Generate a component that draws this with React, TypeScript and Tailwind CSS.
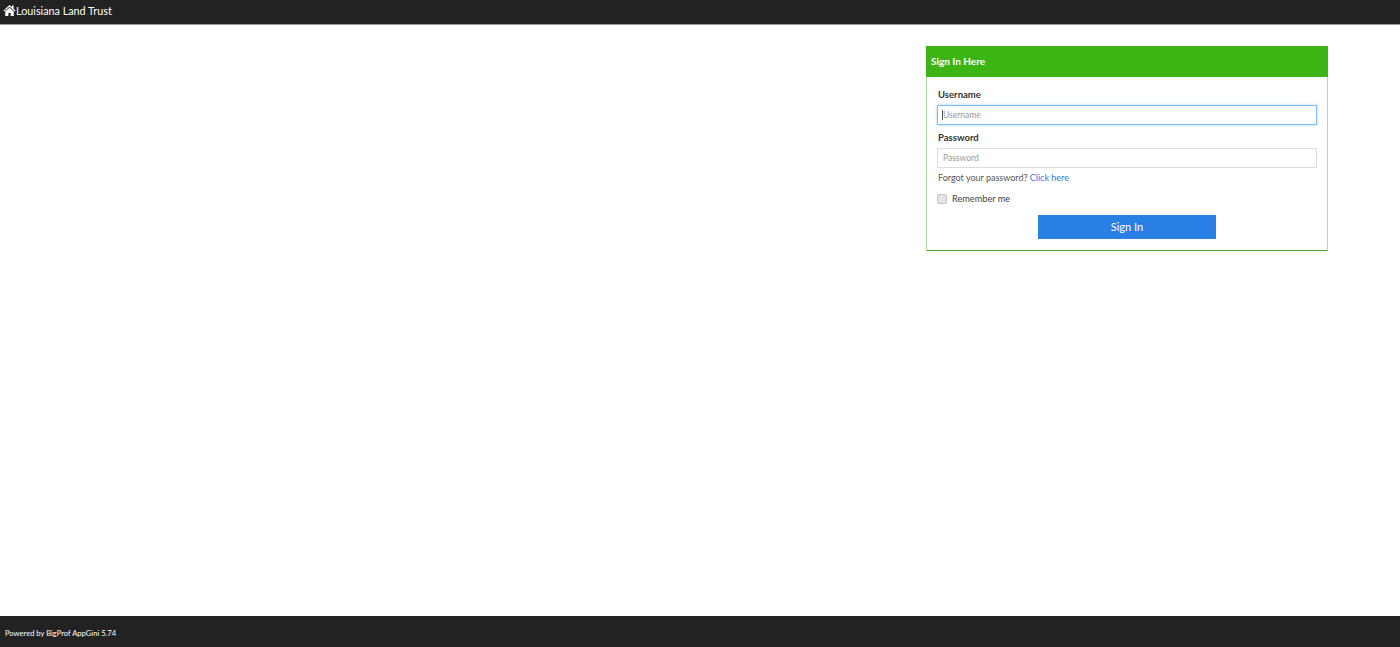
const font = "font-['Lato','Noto_Sans',sans-serif]";

// glyphicon style house, the icon packs only have a slimmer roof
function HomeIcon() {
  return (
    <svg viewBox="0 0 14 14" className="mb-[2px] h-[13px] w-[13px] fill-white">
      <path d="M7 1 L0.4 7.2 L1.3 8.2 L7 2.9 L12.7 8.2 L13.6 7.2 L11.4 5.1 L11.4 1.6 L9.6 1.6 L9.6 3.4 Z" />
      <path d="M7 4 L2.4 8.2 L2.4 13 L5.8 13 L5.8 9.6 L8.2 9.6 L8.2 13 L11.6 13 L11.6 8.2 Z" />
    </svg>
  );
}

export default function App() {
  return (
    <div className={`flex min-h-screen flex-col bg-white ${font}`}>
      <nav className="flex h-[25px] items-center border-b border-[#9a9a9a] bg-[#222222] pb-[2px] pl-[3px] text-[10.8px] text-white">
        <HomeIcon />
        <span>Louisiana Land Trust</span>
      </nav>

      <main className="flex flex-1 justify-end pr-[72px] pt-[21px]">
        <section className="h-[205px] w-[402px] border border-t-0 border-[#b5dc9f] border-b-[#4ea414]">
          <h2 className="-mx-px flex h-[31px] items-center bg-[#3cb514] pl-[5px] text-[10px] font-bold text-white">
            Sign In Here
          </h2>
          <form className="px-[10px] pt-[12px] text-[#333333]">
            <label className="block pl-px text-[9.5px] leading-[12px] font-bold">Username</label>
            <div className="relative mt-[4px]">
              <input
                placeholder="Username"
                className="block h-[20px] w-full border border-[#7fbdf5] px-[5px] text-[8.5px] shadow-[0_0_3px_#a9d3f8] outline-none placeholder:text-[#999999]"
              />
              <span className="absolute left-[5px] top-[5px] h-[10px] w-px bg-[#555555]" />
            </div>
            <label className="mt-[7px] block pl-px text-[9.5px] leading-[12px] font-bold">Password</label>
            <input
              placeholder="Password"
              className="mt-[4px] block h-[20px] w-full border border-[#dddddd] px-[5px] text-[8.5px] outline-none placeholder:text-[#999999]"
            />
            <p className="mt-[4px] pl-px text-[9px] leading-[12px] text-[#555555]">
              Forgot your password? <a className="text-[#2a7ae2]">Click here</a>
            </p>
            <label className="mt-[9px] flex items-center text-[9.2px] leading-[12px] text-[#444444]">
              <span className="h-[10px] w-[10px] rounded-[2px] border border-[#c4c4c4] bg-[#e4e4e4]" />
              <span className="ml-[5px]">Remember me</span>
            </label>
            <div className="mt-[10px] flex justify-center">
              <button type="button" className="h-[24px] w-[178px] bg-[#2a7fe4] text-[11px] text-white">
                Sign In
              </button>
            </div>
          </form>
        </section>
      </main>

      <footer className="flex h-[31px] items-center bg-[#222222] pl-[5px] pt-[4px] text-[7.6px] text-white">
        Powered by BigProf AppGini 5.74
      </footer>
    </div>
  );
}
